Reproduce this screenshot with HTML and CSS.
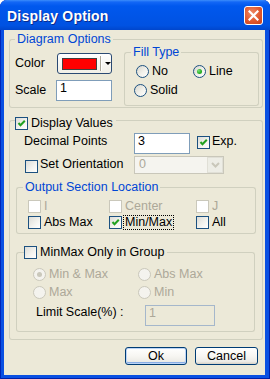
FILE: index.html
```html
<!DOCTYPE html>
<html>
<head>
<meta charset="utf-8">
<link rel="stylesheet" href="styles.css">
</head>
<body>
<div class="window">
  <div class="titlebar">
    <span class="title">Display Option</span>
    <span class="close"><svg width="11" height="11" viewBox="0 0 11 11"><path d="M1.5 1.5 L9.5 9.5 M9.5 1.5 L1.5 9.5" stroke="#fff" stroke-width="2.2" stroke-linecap="square"/></svg></span>
  </div>
  <div class="client">

    <div class="grp g-diagram">
      <div class="gh"><span class="gl"></span><span class="gt">Diagram Options</span><span class="gr"></span></div>
      <div class="gb">
        <div class="dcol">
          <div class="frow"><span class="lbl-color">Color</span>
            <span class="colorbtn"><span class="swatch"></span><span class="cb-sep"></span><span class="cb-arrow"></span></span>
          </div>
          <div class="frow"><span class="lbl-scale">Scale</span><span class="edit">1</span></div>
        </div>
        <div class="grp g-fill">
          <div class="gh"><span class="gl"></span><span class="gt">Fill Type</span><span class="gr"></span></div>
          <div class="gb">
            <div class="rrow r1">
              <span class="opt opt-no"><span class="rad"></span><span>No</span></span>
              <span class="opt"><span class="rad on"></span><span>Line</span></span>
            </div>
            <div class="rrow r2">
              <span class="opt"><span class="rad"></span><span>Solid</span></span>
            </div>
          </div>
        </div>
      </div>
    </div>

    <div class="grp g-display">
      <div class="gh gh-chk"><span class="gl"></span>
        <span class="opt gc"><span class="chk on"><svg viewBox="0 0 11 11" width="11" height="11"><path d="M2.5 5 L4.5 7.3 L8.8 2.8" fill="none" stroke="#21A121" stroke-width="2"/></svg></span><span>Display Values</span></span>
        <span class="gr"></span></div>
      <div class="gb">
        <div class="drow">
          <span class="lbl-dec">Decimal Points</span>
          <span class="edit edit-dec">3</span>
          <span class="chk on exp-chk"><svg viewBox="0 0 11 11" width="11" height="11"><path d="M2.5 5 L4.5 7.3 L8.8 2.8" fill="none" stroke="#21A121" stroke-width="2"/></svg></span>
          <span class="exp-lbl">Exp.</span>
        </div>
        <div class="orow">
          <span class="chk or-chk"></span>
          <span class="lbl-or">Set Orientation</span>
          <span class="combo"><span class="combo-val">0</span><span class="combo-btn"><svg width="9" height="6" viewBox="0 0 9 6"><path d="M1 1 L4.5 4.5 L8 1" fill="none" stroke="#C9C7BA" stroke-width="2"/></svg></span></span>
        </div>

        <div class="grp g-output">
          <div class="gh"><span class="gl"></span><span class="gt">Output Section Location</span><span class="gr"></span></div>
          <div class="gb">
            <div class="ogrid">
              <span class="opt dis"><span class="chk"></span><span>I</span></span>
              <span class="opt dis"><span class="chk"></span><span>Center</span></span>
              <span class="opt dis"><span class="chk"></span><span>J</span></span>
              <span class="opt"><span class="chk"></span><span>Abs Max</span></span>
              <span class="opt"><span class="chk on"><svg viewBox="0 0 11 11" width="11" height="11"><path d="M2.5 5 L4.5 7.3 L8.8 2.8" fill="none" stroke="#21A121" stroke-width="2"/></svg></span><span class="focus">Min/Max</span></span>
              <span class="opt"><span class="chk"></span><span>All</span></span>
            </div>
          </div>
        </div>

        <div class="grp g-minmax">
          <div class="gh"><span class="gl"></span>
            <span class="opt gc2"><span class="chk"></span><span>MinMax Only in Group</span></span>
            <span class="gr"></span></div>
          <div class="gb">
            <div class="mgrid">
              <span class="opt dis"><span class="rad on"></span><span>Min &amp; Max</span></span>
              <span class="opt dis"><span class="rad"></span><span>Abs Max</span></span>
              <span class="opt dis"><span class="rad"></span><span>Max</span></span>
              <span class="opt dis"><span class="rad"></span><span>Min</span></span>
            </div>
            <div class="lrow">
              <span class="lbl-limit">Limit Scale(%) :</span>
              <span class="edit edit-dis">1</span>
            </div>
          </div>
        </div>
      </div>
    </div>

    <div class="buttons">
      <span class="btn btn-default">Ok</span>
      <span class="btn btn-cancel">Cancel</span>
    </div>
  </div>
</div>
</body>
</html>
```
FILE: styles.css
```css
* { box-sizing: border-box; }
html, body { margin: 0; padding: 0; }
body {
  width: 270px;
  height: 379px;
  overflow: hidden;
  background: #ffffff;
  font: 12.5px/13px "Liberation Sans", Arial, sans-serif;
  color: #000;
}

.window {
  width: 270px;
  height: 379px;
  display: flex;
  flex-direction: column;
  background: #0A50E2;
  border-radius: 7px 7px 0 0;
  overflow: hidden;
  box-shadow: inset 1px 0 #0025B8, inset -1px 0 #0020A8, inset 0 -1px #0020A8;
}

.titlebar {
  height: 30px;
  flex: none;
  display: flex;
  align-items: center;
  padding: 0 7px 0 7px;
  background: linear-gradient(to bottom, #3C8DFB 0, #1367F6 2px, #0058EE 6px, #0055E8 50%, #0052E2 85%, #0046CC 100%);
}
.title {
  color: #fff;
  font: bold 14px/14px "Liberation Sans", Arial, sans-serif;
  letter-spacing: 0.2px;
  text-shadow: 1px 1px #0C2A8C;
  margin-top: 2px;
}
.close {
  margin-left: auto;
  width: 19px;
  height: 19px;
  border: 1px solid #fff;
  border-radius: 3px;
  background: radial-gradient(circle at 40% 35%, #EE8A66 0, #E0582E 55%, #C8401A 100%);
  display: flex;
  align-items: center;
  justify-content: center;
}

.client {
  flex: 1;
  margin: 0 5px 4px 4px;
  background: #ECE9D8;
  padding: 3px 2px 0 5px;
  display: flex;
  flex-direction: column;
}

/* group boxes */
.grp { display: flex; flex-direction: column; }
.gh { display: flex; align-items: stretch; }
.gl {
  flex: none;
  margin-top: 6px;
  border-top: 1px solid #D0D0BF;
  border-left: 1px solid #D0D0BF;
  border-top-left-radius: 3px;
}
.gr {
  flex: 1;
  margin-top: 6px;
  border-top: 1px solid #D0D0BF;
  border-right: 1px solid #D0D0BF;
  border-top-right-radius: 3px;
}
.gt { padding: 0 2px; line-height: 13px; color: #0046D5; white-space: nowrap; }
.gb {
  border: 1px solid #D0D0BF;
  border-top: none;
  border-radius: 0 0 3px 3px;
}

/* Diagram options */
.g-diagram .gl { width: 6px; }
.g-diagram > .gb { display: flex; align-items: flex-start; padding: 0 3px 1px 5px; }
.dcol { width: 109px; padding-top: 7px; flex: none; }
.frow { display: flex; align-items: center; height: 21px; }
.frow + .frow { margin-top: 6px; }
.lbl-color { width: 42px; }
.lbl-scale { width: 41px; }

.colorbtn {
  width: 55px;
  height: 21px;
  border: 1px solid #2B4A73;
  border-radius: 3px;
  background: linear-gradient(to bottom, #FFFFFF, #F1EFE6);
  display: flex;
  align-items: center;
  padding-left: 4px;
}
.swatch {
  width: 35px;
  height: 12px;
  background: #FF0000;
  border: 1px solid #404040;
}
.cb-sep {
  width: 2px;
  height: 15px;
  margin-left: 3px;
  border-left: 1px solid #ACA899;
  border-right: 1px solid #fff;
}
.cb-arrow {
  margin-left: 3px;
  width: 0;
  height: 0;
  border-left: 3px solid transparent;
  border-right: 3px solid transparent;
  border-top: 3px solid #000;
}

.edit {
  display: block;
  width: 56px;
  height: 21px;
  border: 1px solid #7F9DB9;
  background: #fff;
  padding: 1px 3px;
  line-height: 13px;
}

.g-fill { width: 135px; flex: none; }
.g-fill .gl { width: 7px; }
.g-fill .gb { padding: 6px 0 8px 6px; }
.rrow { display: flex; height: 13px; }
.rrow + .rrow { margin-top: 6px; }
.r1 { padding-left: 5px; }
.r2 { padding-left: 3px; }

.opt { display: flex; align-items: center; gap: 3px; height: 13px; white-space: nowrap; }
.opt-no { width: 57px; }
.opt.dis { color: #ACA899; }

/* radio */
.rad {
  flex: none;
  width: 13px;
  height: 13px;
  border-radius: 50%;
  border: 1px solid #1C5180;
  background: linear-gradient(135deg, #D7D6CE 0%, #F2F1EB 55%, #FFFFFF 100%);
  display: flex;
  align-items: center;
  justify-content: center;
}
.rad.on::after {
  content: "";
  width: 5px;
  height: 5px;
  border-radius: 50%;
  background: radial-gradient(circle at 35% 35%, #7BE37A 0, #2DB42A 50%, #159A12 100%);
}
.dis .rad { border-color: #CAC8BB; background: #F4F3EE; }
.dis .rad.on::after { background: #CAC8BB; }

/* checkbox */
.chk {
  flex: none;
  width: 13px;
  height: 13px;
  border: 1px solid #1C5180;
  background: linear-gradient(135deg, #DCDCD7 0%, #F4F4F0 60%, #FFFFFF 100%);
  display: flex;
  align-items: center;
  justify-content: center;
}
.chk svg { display: block; }
.dis .chk { border-color: #CAC8BB; background: #FFFFFF; }

/* display values */
.g-display { margin-top: 6px; }
.g-display > .gh > .gl { width: 6px; }
.gc { margin-top: 3px; padding-right: 3px; }
.g-display > .gb { padding: 3px 6px 7px 5px; }

.drow { display: flex; align-items: flex-start; }
.lbl-dec { width: 110px; margin-left: 9px; margin-top: 2px; }
.edit-dec { width: 56px; }
.exp-chk { margin-left: 7px; margin-top: 3px; }
.exp-lbl { margin-left: 2px; margin-top: 2px; }

.orow { display: flex; align-items: flex-start; margin-top: 2px; }
.or-chk { margin-left: 10px; margin-top: 4px; }
.lbl-or { width: 96px; padding-left: 2px; margin-top: 2px; }
.combo {
  width: 90px;
  height: 18px;
  border: 1px solid #C9C7BA;
  background: #F5F4EF;
  display: flex;
}
.combo-val { flex: 1; color: #ACA899; padding: 1px 0 0 4px; }
.combo-btn {
  width: 16px;
  height: 16px;
  background: #EDEDE6;
  border: 1px solid #E0DFD6;
  display: flex;
  align-items: center;
  justify-content: center;
}

.g-output { margin: 7px 0 0 1px; }
.g-output .gl { width: 7px; }
.g-output .gb { padding: 6px 0 4px 6px; }
.ogrid {
  display: grid;
  grid-template-columns: 81px 87px auto;
  row-gap: 3px;
  padding-left: 5px;
}
.focus { outline: 1px dotted #000; outline-offset: 0; padding: 0 1px; margin-left: -1px; }

.g-minmax { margin: 12px 1px 0 1px; }
.g-minmax .gl { width: 8px; }
.gc2 { padding-right: 3px; }
.g-minmax .gb { padding: 9px 0 5px 7px; }
.mgrid {
  display: grid;
  grid-template-columns: 105px auto;
  row-gap: 5px;
  padding-left: 9px;
}
.lrow { display: flex; align-items: flex-start; margin-top: 6px; }
.lbl-limit { width: 109px; margin-left: 12px; margin-top: 1px; }
.edit-dis { width: 70px; background: #ECE9D8; border-color: #A5B7CB; color: #ACA899; }

.buttons {
  display: flex;
  justify-content: flex-end;
  gap: 8px;
  margin-top: 7px;
  padding-right: 5px;
}
.btn {
  height: 18px;
  border: 1px solid #003C74;
  border-radius: 3px;
  background: linear-gradient(to bottom, #FFFFFF 0%, #F7F6F2 50%, #ECEBE6 85%, #D6D0C5 100%);
  display: flex;
  align-items: center;
  justify-content: center;
}
.btn-default { width: 62px; box-shadow: inset 0 0 0 1px #BCD4F6, inset 0 -1px 0 1px #89ADE4; }
.btn-cancel { width: 63px; }
```
